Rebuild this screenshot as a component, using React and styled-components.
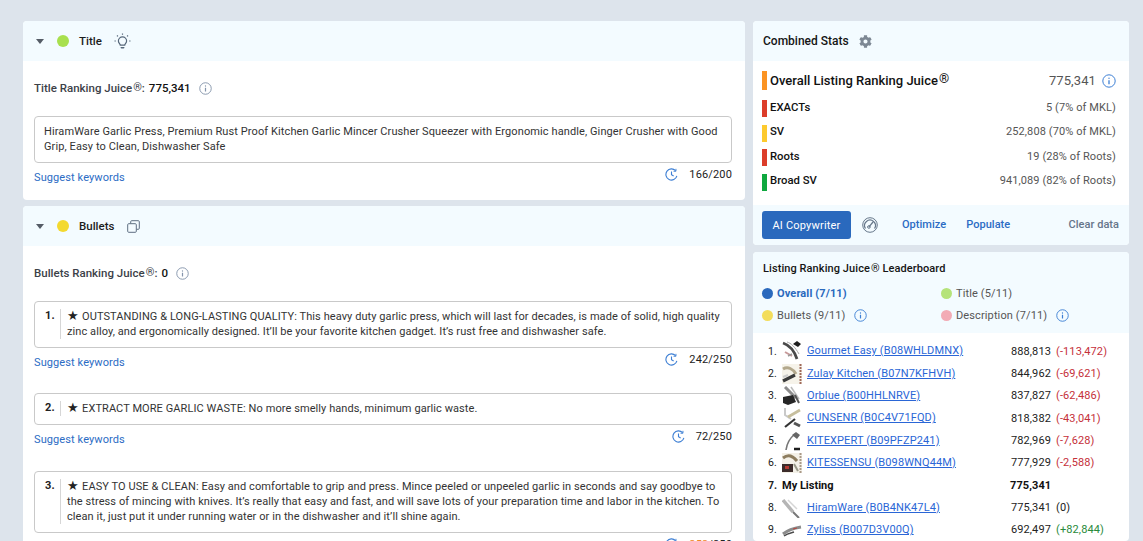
import React from 'react'
import styled, { createGlobalStyle } from 'styled-components'
import { FaCog } from 'react-icons/fa'

const Global = createGlobalStyle`
  html, body {
    margin: 0;
    height: 541px;
    overflow: hidden;
    background: #dde4ec;
    font-family: Roboto, "Liberation Sans", sans-serif;
    color: #222;
  }
  * { box-sizing: border-box; }
`
const Page = styled.div`
  display: flex;
  gap: 8px;
  align-items: flex-start;
  padding: 21px 14px 0 23px;
  height: 541px;
  overflow: hidden;
`
const LeftCol = styled.div`
  width: 722px;
  flex: none;
  display: flex;
  flex-direction: column;
  gap: 6px;
`
const RightCol = styled.div`
  width: 376px;
  flex: none;
  display: flex;
  flex-direction: column;
  gap: 7px;
`
const Card = styled.section`
  background: #fff;
  border-radius: 4px;
  overflow: hidden;
`
const Header = styled.header`
  height: 40px;
  background: #f3fbff;
  display: flex;
  align-items: center;
  padding-left: 13px;
`
const Caret = styled.span`
  width: 0;
  height: 0;
  border-left: 4px solid transparent;
  border-right: 4px solid transparent;
  border-top: 5px solid #555c66;
  margin-right: 13px;
`
const Dot = styled.span`
  width: ${p => p.$size || 12}px;
  height: ${p => p.$size || 12}px;
  border-radius: 50%;
  flex: none;
  background: ${p => p.$color};
`
const SectionName = styled.span`
  font-size: 11.5px;
  font-weight: 500;
  color: #1c1c1c;
  margin: 0 ${p => p.$gap}px 0 10px;
`
const Body = styled.div`
  padding: ${p => p.$top}px 13px ${p => p.$bottom || 0}px 11px;
`
const JuiceLine = styled.div`
  display: flex;
  align-items: center;
  height: 14px;
  font-size: 11.5px;
  font-weight: 500;
  color: #3c4148;
`
const JuiceValue = styled.span`
  color: #111;
  margin-left: 4px;
  margin-right: 8px;
`
const Reg = styled.sup`
  font-size: ${p => p.$size || 11}px;
  font-weight: 400;
  line-height: 0;
  vertical-align: ${p => p.$raise || 4}px;
  margin-left: 1px;
`
const TextBox = styled.div`
  display: flex;
  border: 1px solid #c9c9c9;
  border-radius: 4px;
  margin-top: ${p => p.$mt}px;
  padding: ${p => (p.$numbered ? '7px 9px 8px 8px' : '7px 9px 8px 9px')};
  font-size: 11px;
  line-height: 15px;
  letter-spacing: ${p => (p.$numbered ? 0.08 : 0.1)}px;
  color: #333;
`
const Num = styled.span`
  width: 17px;
  flex: none;
  font-weight: 700;
  color: #222;
  padding-left: 2px;
  margin-top: -1px;
`
const NumText = styled.div`
  border-left: 1px solid #d6d6d6;
  padding-left: 6px;
  flex: 1;
`
const Star = styled.span`
  font-size: 13px;
  line-height: 0;
  color: #222;
  margin-right: 3px;
`
const Below = styled.div`
  display: flex;
  align-items: center;
  justify-content: space-between;
  margin-top: 7px;
  height: 14px;
`
const Suggest = styled.a`
  font-size: 11px;
  letter-spacing: 0.1px;
  color: #2b6cc4;
`
const Counter = styled.div`
  display: flex;
  align-items: center;
  font-size: 11px;
  letter-spacing: 0.15px;
  color: #222;
  gap: 11px;
  margin-bottom: 6px;
`
const Over = styled.span`
  color: #f08a2c;
`
const Bullet = styled.div`
  margin-bottom: ${p => p.$mb}px;
`
const StatsHeader = styled(Header)`
  padding-left: 10px;
`
const StatsTitle = styled.span`
  font-size: 12px;
  font-weight: 500;
  color: #151515;
  margin-right: 10px;
`
const StatsBody = styled.div`
  padding: 10px 13px 0 9px;
  height: 144px;
`
const StatRow = styled.div`
  display: flex;
  align-items: center;
  justify-content: space-between;
  height: ${p => (p.$big ? 19 : 17)}px;
  margin-bottom: ${p => (p.$big ? 10 : 7.5)}px;
`
const StatLabel = styled.div`
  display: flex;
  align-items: center;
  height: 100%;
  font-size: ${p => (p.$big ? 13 : 11.3)}px;
  font-weight: 500;
  color: #111;
`
const StatText = styled.span`
  margin-top: ${p => (p.$big ? 0 : -3)}px;
`
const Swatch = styled.span`
  width: 5px;
  height: 100%;
  background: ${p => p.$color};
  margin-right: 3px;
`
const StatValue = styled.div`
  display: flex;
  align-items: center;
  gap: 6px;
  font-size: ${p => (p.$big ? 13 : 11)}px;
  color: #555;
  letter-spacing: 0.1px;
  margin-top: ${p => (p.$big ? 0 : -3)}px;
`
const Footer = styled.footer`
  height: 40px;
  background: #f3fbff;
  display: flex;
  align-items: center;
  padding: 0 10px 2px 9px;
`
const Primary = styled.button`
  width: 89px;
  height: 28px;
  border: 0;
  border-radius: 3px;
  background: #2a69bd;
  color: #fff;
  font: 400 11px Roboto, sans-serif;
  letter-spacing: 0.2px;
  margin: 2px 11px 0 0;
`
const FootLink = styled.a`
  font-size: 11px;
  font-weight: 500;
  letter-spacing: 0.03px;
  color: ${p => (p.$muted ? '#66758a' : '#2b6cc4')};
  margin-left: ${p => (p.$push ? 'auto' : `${p.$ml}px`)};
`
const GaugeWrap = styled.span`
  display: flex;
  margin-top: 2px;
`
const BoardHeader = styled.div`
  background: #f3fbff;
  height: 81px;
  padding: 10px 9px 0;
`
const BoardTitle = styled.div`
  font-size: 11px;
  font-weight: 500;
  letter-spacing: 0.08px;
  color: #151515;
  height: 13px;
  padding-left: 1px;
  display: flex;
  align-items: center;
`
const Legend = styled.div`
  display: grid;
  grid-template-columns: 179px 1fr;
  grid-auto-rows: 22px;
  margin-top: 7px;
`
const LegendItem = styled.div`
  display: flex;
  align-items: center;
  gap: 4px;
  font-size: 11px;
  letter-spacing: 0.12px;
  font-weight: ${p => (p.$active ? 700 : 400)};
  color: ${p => (p.$active ? '#2a69bd' : '#555')};
`
const InfoWrap = styled.span`
  display: inline-flex;
  margin-left: ${p => p.$ml || 0}px;
`
const Board = styled.div`
  padding: 7px 0 0 15px;
`
const BoardRow = styled.div`
  display: grid;
  grid-template-columns: 14px 25px 204px 45px 1fr;
  align-items: center;
  height: 22.35px;
  font-size: 11px;
  color: #222;
`
const Rank = styled.span`
  font-size: 10.5px;
  font-weight: ${p => (p.$bold ? 700 : 400)};
`
const Thumb = styled.span`
  display: flex;
  width: 20px;
  height: 20px;
`
const BoardLink = styled.a`
  color: #2a66d6;
  text-decoration: underline;
  letter-spacing: 0.12px;
  white-space: nowrap;
  margin-top: -1px;
`
const Score = styled.span`
  letter-spacing: 0.1px;
  font-weight: ${p => (p.$bold ? 700 : 400)};
  color: ${p => (p.$bold ? '#111' : '#222')};
  margin-left: ${p => (p.$bold ? -1 : 0)}px;
`
const Delta = styled.span`
  letter-spacing: 0.12px;
  color: ${p => p.$tone};
`
const MineName = styled.span`
  grid-column: 2 / 4;
  font-weight: 700;
  color: #111;
`

const InfoIcon = ({ color = '#8494ab', size = 13 }) => (
  <svg width={size} height={size} viewBox="0 0 14 14" fill="none" stroke={color} strokeWidth="1">
    <circle cx="7" cy="7" r="6.2" />
    <circle cx="7" cy="4.3" r="0.7" fill={color} stroke="none" />
    <path d="M7 6.2v4" strokeWidth="1.3" />
  </svg>
)

const HistoryIcon = () => (
  <svg width="13" height="13" viewBox="0 0 14 14" fill="none" stroke="#3d7fd4" strokeWidth="1.2">
    <path d="M11.4 2.9A6 6 0 1 0 12.8 8.5" />
    <path d="M11.8 0.9v2.6H9.2" strokeWidth="1" />
    <path d="M7 3.8v3.5l2.3 1.4" />
  </svg>
)

const Bulb = () => (
  <svg width="17" height="17" viewBox="0 0 17 17" fill="none" stroke="#56677a" strokeWidth="1.2">
    <path d="M6.3 12.2c0-1.4-1.9-2-1.9-4.2a4.1 4.1 0 0 1 8.200 0c0 2.200-1.900 2.800-1.900 4.200z" />
    <path d="M6.600 13.900v.6a1 1 0 0 0 1 1h1.800a1 1 0 0 0 1-1v-.6z" fill="#56677a" stroke="none" />
    <path d="M8.500 0.500v1.300M3 2.500l.9.900M14 2.500l-.9.900M0.500 8h1.300M15.200 8h1.300" />
  </svg>
)

const CopyIcon = () => (
  <svg width="13" height="13" viewBox="0 0 13 13" fill="none" stroke="#5f6f82" strokeWidth="1">
    <rect x="0.700" y="3.700" width="8.600" height="8.600" rx="1" />
    <path d="M3.700 3.500V1.700a1 1 0 0 1 1-1h6.600a1 1 0 0 1 1 1v6.600a1 1 0 0 1-1 1H9.500" />
  </svg>
)

const Gauge = () => (
  <svg width="16" height="16" viewBox="0 0 16 16" fill="none" stroke="#66778a" strokeWidth="1">
    <circle cx="8" cy="8" r="7.300" />
    <path d="M3.500 11.500a5.400 5.400 0 1 1 9 0" strokeWidth="1.200" />
    <path d="M7 9.800 11 5" strokeWidth="1.300" />
    <circle cx="6.900" cy="10" r="1.300" />
  </svg>
)

// tiny stand-ins for the product photos
const Press = ({ variant }) => {
  const shapes = {
    dark: <>
      <path d="M1 2C7 4 12 9 15 18" stroke="#4a4a4a" strokeWidth="2.800" fill="none" />
      <path d="M5 1c4 1 8 5 12 12" stroke="#aaa" strokeWidth="1" fill="none" />
      <path d="M11 3l4-3 4 3-3 3z" fill="#1e1e1e" />
      <path d="M3 11l7 4" stroke="#c79a9a" strokeWidth="2" />
      <path d="M6 15l4-2" stroke="#999" strokeWidth="1.500" />
    </>,
    kit: <>
      <rect x="0" y="0" width="20" height="20" fill="#f6f3ea" />
      <path d="M1 5c5-3 10 0 13 5" stroke="#b3a88c" strokeWidth="3" fill="none" />
      <path d="M1 17l12-6" stroke="#3a3a3a" strokeWidth="3.200" />
      <path d="M1 13l5-2" stroke="#ccc" strokeWidth="2" />
      <path d="M18.500 0v20" stroke="#a06a5a" strokeWidth="2" strokeDasharray="2 1" />
    </>,
    black: <>
      <path d="M3 1l11 11" stroke="#8c8c8c" strokeWidth="3" />
      <path d="M9 1l8 12" stroke="#bbb" strokeWidth="1.500" />
      <path d="M1 11l10-2 3 7-8 3-5-2z" fill="#262626" />
      <path d="M13 9l4 8" stroke="#555" strokeWidth="2" />
    </>,
    silver: <>
      <path d="M3 0v7l6 4" stroke="#c9c9c9" strokeWidth="2" fill="none" />
      <path d="M18 2L6 9" stroke="#c7bf9e" strokeWidth="2.800" />
      <path d="M3 19l10-8" stroke="#333" strokeWidth="2.200" />
      <path d="M12 15l6 3" stroke="#555" strokeWidth="3" />
    </>,
    thin: <>
      <path d="M13 3C8 7 5 11 4 19" stroke="#777" strokeWidth="1.600" fill="none" />
      <path d="M10 4l4-3 4 3-3 4z" fill="#666" />
      <path d="M12 18h6" stroke="#1e1e1e" strokeWidth="2.500" />
    </>,
    set: <>
      <rect x="0" y="0" width="20" height="20" fill="#f4f1e8" />
      <path d="M1 5c5-4 10-2 14 3" stroke="#8d7d5f" strokeWidth="3" fill="none" />
      <rect x="0" y="11" width="11" height="8" fill="#3c2c2a" />
      <rect x="3" y="13" width="4" height="3" fill="#b53a32" />
      <path d="M12 11l4 7" stroke="#998" strokeWidth="2" />
      <path d="M18.500 0v20" stroke="#a98" strokeWidth="2" strokeDasharray="2 1" />
    </>,
    plain: <>
      <path d="M1 2l10 12" stroke="#b5b5b5" strokeWidth="3.500" />
      <path d="M6 2l9 9" stroke="#d5d5d5" strokeWidth="1.500" />
      <path d="M11 14l6 6" stroke="#777" strokeWidth="2" />
    </>,
    flat: <>
      <path d="M1 14C6 10 13 8 19 7" stroke="#8b8b8b" strokeWidth="3" fill="none" />
      <path d="M2 16c4-3 7-3 10-4" stroke="#4a4a4a" strokeWidth="1.500" fill="none" />
      <path d="M11 9l4-1" stroke="#b8433c" strokeWidth="1" />
    </>
  }
  return <Thumb><svg width="20" height="20" viewBox="0 0 20 20">{shapes[variant]}</svg></Thumb>
}

const RED = '#c5303a'
const GREEN = '#2a8a3c'
const rows = [
  { n: 1, img: 'dark', name: 'Gourmet Easy (B08WHLDMNX)', score: '888,813', delta: '(-113,472)', tone: RED },
  { n: 2, img: 'kit', name: 'Zulay Kitchen (B07N7KFHVH)', score: '844,962', delta: '(-69,621)', tone: RED },
  { n: 3, img: 'black', name: 'Orblue (B00HHLNRVE)', score: '837,827', delta: '(-62,486)', tone: RED },
  { n: 4, img: 'silver', name: 'CUNSENR (B0C4V71FQD)', score: '818,382', delta: '(-43,041)', tone: RED },
  { n: 5, img: 'thin', name: 'KITEXPERT (B09PFZP241)', score: '782,969', delta: '(-7,628)', tone: RED },
  { n: 6, img: 'set', name: 'KITESSENSU (B098WNQ44M)', score: '777,929', delta: '(-2,588)', tone: RED },
  { n: 7, mine: true, score: '775,341' },
  { n: 8, img: 'plain', name: 'HiramWare (B0B4NK47L4)', score: '775,341', delta: '(0)', tone: '#222' },
  { n: 9, img: 'flat', name: 'Zyliss (B007D3V00Q)', score: '692,497', delta: '(+82,844)', tone: GREEN }
]

const stats = [
  { label: 'EXACTs', color: '#dc3d2a', value: '5 (7% of MKL)' },
  { label: 'SV', color: '#fdca2e', value: '252,808 (70% of MKL)' },
  { label: 'Roots', color: '#dc3d2a', value: '19 (28% of Roots)' },
  { label: 'Broad SV', color: '#0fa83f', value: '941,089 (82% of Roots)' }
]

const bullets = [
  {
    n: 1, mt: 21, mb: 24, count: '242/250',
    text: 'OUTSTANDING & LONG-LASTING QUALITY: This heavy duty garlic press, which will last for decades, is made of solid, high quality zinc alloy, and ergonomically designed. It’ll be your favorite kitchen gadget. It’s rust free and dishwasher safe.'
  },
  {
    n: 2, mt: 0, mb: 25, count: '72/250',
    text: 'EXTRACT MORE GARLIC WASTE: No more smelly hands, minimum garlic waste.'
  },
  {
    n: 3, mt: 0, mb: 0, count: <span><Over>253</Over>/250</span>,
    text: 'EASY TO USE & CLEAN: Easy and comfortable to grip and press. Mince peeled or unpeeled garlic in seconds and say goodbye to the stress of mincing with knives. It’s really that easy and fast, and will save lots of your preparation time and labor in the kitchen. To clean it, just put it under running water or in the dishwasher and it’ll shine again.'
  }
]

const App = () => (
  <Page>
    <Global />
    <LeftCol>
      <Card>
        <Header>
          <Caret />
          <Dot $color="#a8e04e" />
          <SectionName $gap={12}>Title</SectionName>
          <Bulb />
        </Header>
        <Body $top={20} $bottom={16}>
          <JuiceLine>
            Title Ranking Juice<Reg>®</Reg>:
            <JuiceValue>775,341</JuiceValue>
            <InfoWrap><InfoIcon /></InfoWrap>
          </JuiceLine>
          <TextBox $mt={21}>
            HiramWare Garlic Press, Premium Rust Proof Kitchen Garlic Mincer Crusher Squeezer with Ergonomic handle, Ginger Crusher with Good Grip, Easy to Clean, Dishwasher Safe
          </TextBox>
          <Below>
            <Suggest>Suggest keywords</Suggest>
            <Counter><HistoryIcon />166/200</Counter>
          </Below>
        </Body>
      </Card>
      <Card>
        <Header>
          <Caret />
          <Dot $color="#f3d92f" />
          <SectionName $gap={13}>Bullets</SectionName>
          <CopyIcon />
        </Header>
        <Body $top={20}>
          <JuiceLine>
            Bullets Ranking Juice<Reg>®</Reg>:
            <JuiceValue>0</JuiceValue>
            <InfoWrap><InfoIcon /></InfoWrap>
          </JuiceLine>
          {bullets.map(b => (
            <Bullet key={b.n} $mb={b.mb}>
              <TextBox $mt={b.mt} $numbered>
                <Num>{b.n}.</Num>
                <NumText><Star>★</Star>{b.text}</NumText>
              </TextBox>
              <Below>
                <Suggest>Suggest keywords</Suggest>
                <Counter><HistoryIcon />{b.count}</Counter>
              </Below>
            </Bullet>
          ))}
        </Body>
      </Card>
    </LeftCol>
    <RightCol>
      <Card>
        <StatsHeader>
          <StatsTitle>Combined Stats</StatsTitle>
          <FaCog size={13} color="#7d8894" />
        </StatsHeader>
        <StatsBody>
          <StatRow $big>
            <StatLabel $big>
              <Swatch $color="#fb9424" />
              <StatText $big>Overall Listing Ranking Juice<Reg $size={13} $raise={2}>®</Reg></StatText>
            </StatLabel>
            <StatValue $big>775,341<InfoIcon color="#3d7fd4" size={14} /></StatValue>
          </StatRow>
          {stats.map(s => (
            <StatRow key={s.label}>
              <StatLabel>
                <Swatch $color={s.color} />
                <StatText>{s.label}</StatText>
              </StatLabel>
              <StatValue>{s.value}</StatValue>
            </StatRow>
          ))}
        </StatsBody>
        <Footer>
          <Primary>AI Copywriter</Primary>
          <GaugeWrap><Gauge /></GaugeWrap>
          <FootLink $ml={24}>Optimize</FootLink>
          <FootLink $ml={20}>Populate</FootLink>
          <FootLink $push $muted>Clear data</FootLink>
        </Footer>
      </Card>
      <Card>
        <BoardHeader>
          <BoardTitle>Listing Ranking Juice<Reg>®</Reg>&nbsp;Leaderboard</BoardTitle>
          <Legend>
            <LegendItem $active><Dot $size={11} $color="#2a69bd" />Overall (7/11)</LegendItem>
            <LegendItem><Dot $size={11} $color="#b5e37a" />Title (5/11)</LegendItem>
            <LegendItem><Dot $size={11} $color="#f3dd5c" />Bullets (9/11)<InfoWrap $ml={5}><InfoIcon color="#3d7fd4" /></InfoWrap></LegendItem>
            <LegendItem><Dot $size={11} $color="#f2abb5" />Description (7/11)<InfoWrap $ml={5}><InfoIcon color="#3d7fd4" /></InfoWrap></LegendItem>
          </Legend>
        </BoardHeader>
        <Board>
          {rows.map(r => (
            <BoardRow key={r.n}>
              <Rank $bold={r.mine}>{r.n}.</Rank>
              {r.mine ? <MineName>My Listing</MineName> : <Press variant={r.img} />}
              {!r.mine && <BoardLink>{r.name}</BoardLink>}
              <Score $bold={r.mine}>{r.score}</Score>
              {r.delta && <Delta $tone={r.tone}>{r.delta}</Delta>}
            </BoardRow>
          ))}
        </Board>
      </Card>
    </RightCol>
  </Page>
)

export default App
